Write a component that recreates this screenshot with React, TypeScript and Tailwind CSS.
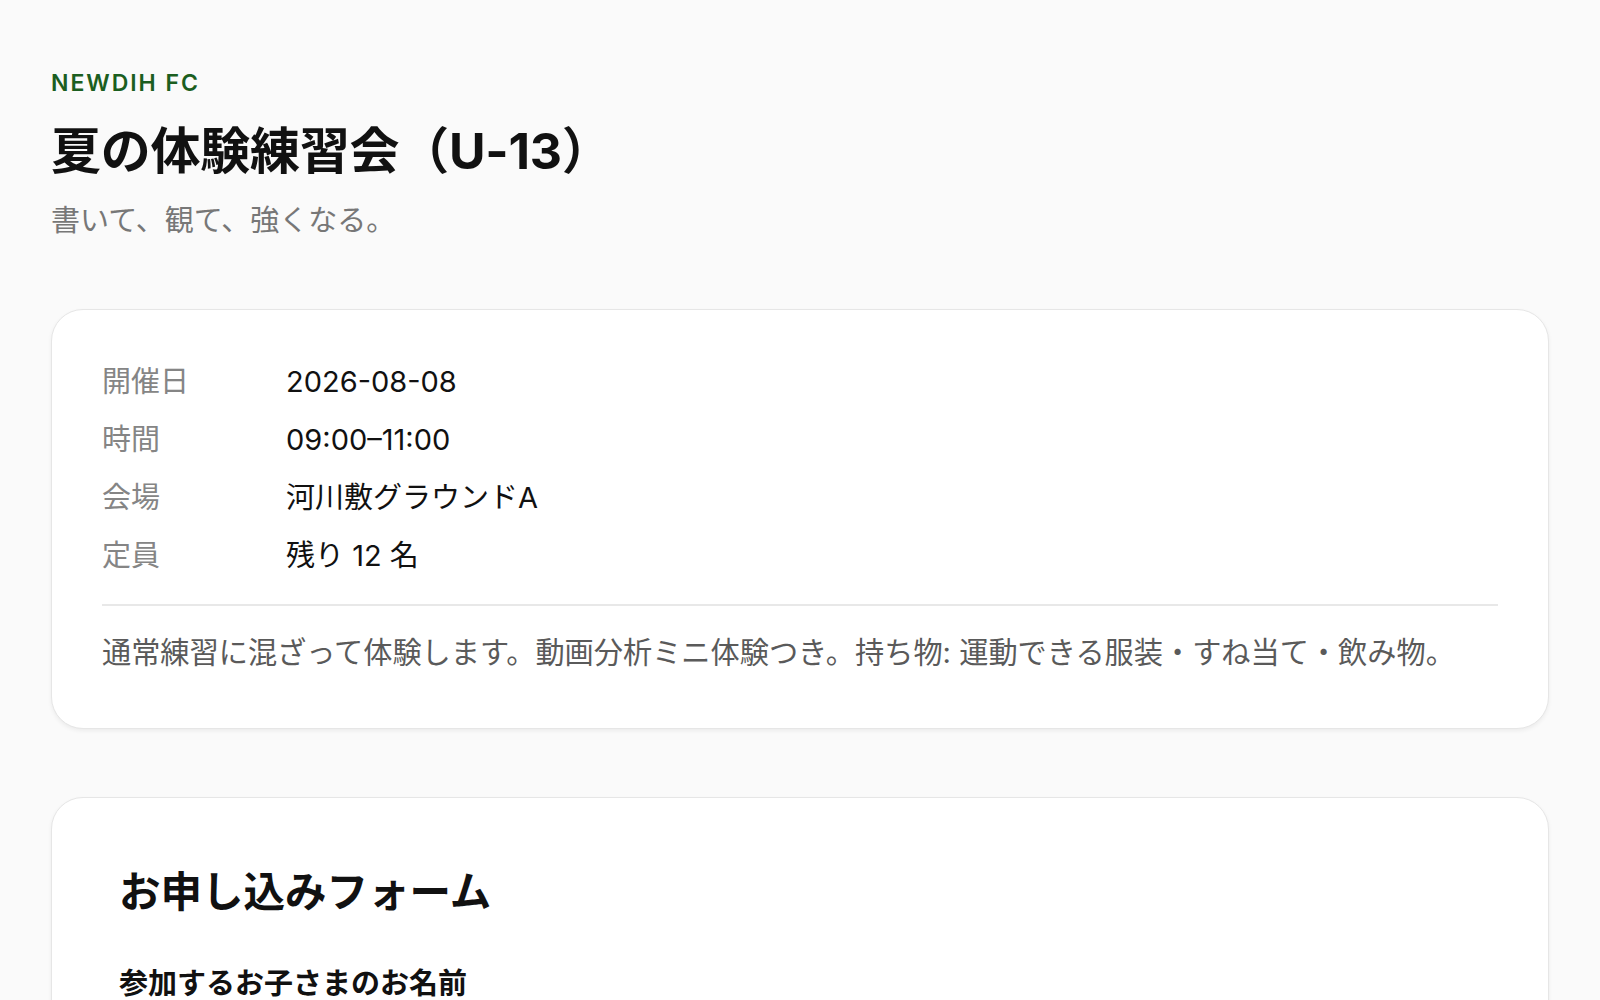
const font = { fontFamily: '"Inter", "Noto Sans CJK JP", sans-serif' }

const rows = [
  { label: '開催日', value: '2026-08-08' },
  { label: '時間', value: '09:00–11:00' },
  { label: '会場', value: '河川敷グラウンドA' },
  { label: '定員', value: '残り 12 名' },
]

export default function App() {
  return (
    <div
      className="min-h-screen bg-[#fafafa] px-[51px] pt-[66px] pb-20 text-[#111]"
      style={font}
    >
      <header>
        <p className="text-[23px] leading-[34px] font-semibold tracking-[0.085em] text-[#1b5e20]">
          NEWDIH FC
        </p>
        <h1 className="mt-[19px] text-[50px] leading-[64px] font-bold tracking-[-0.005em]">
          夏の体験練習会（U-13）
        </h1>
        <p className="mt-[18px] text-[29px] leading-[40px] text-[#777]">書いて、観て、強くなる。</p>
      </header>

      <section className="mt-[68px] rounded-[32px] border border-[#e6e6e6] bg-white px-[50px] pt-[52px] pb-[55px] shadow-[0_2px_4px_rgba(0,0,0,0.06)]">
        <dl className="flex flex-col gap-[18px]">
          {rows.map((r) => (
            <div key={r.label} className="flex text-[29px] leading-[40px]">
              <dt className="w-[184px] shrink-0 text-[#858585]">{r.label}</dt>
              <dd className="text-[#111]">{r.value}</dd>
            </div>
          ))}
        </dl>
        <div className="mt-[28px] border-t-2 border-[#e8e8e8]" />
        <p className="mt-[27px] text-[29.2px] leading-[40px] text-[#5a5a5a]">
          通常練習に混ざって体験します。動画分析ミニ体験つき。持ち物: 運動できる服装・すね当て・飲み物。
        </p>
      </section>

      <section className="mt-[68px] rounded-[32px] border border-[#e6e6e6] bg-white px-[67px] pt-[66px] pb-[68px] shadow-[0_2px_4px_rgba(0,0,0,0.06)]">
        <h2 className="text-[41.5px] leading-[56px] font-bold">お申し込みフォーム</h2>
        <label className="mt-[44px] block text-[29px] leading-[40px] font-bold">
          参加するお子さまのお名前
        </label>
        <input className="mt-3 w-full rounded-[14px] border border-[#d4d4d4] px-5 py-4 text-[28px]" />
      </section>
    </div>
  )
}
